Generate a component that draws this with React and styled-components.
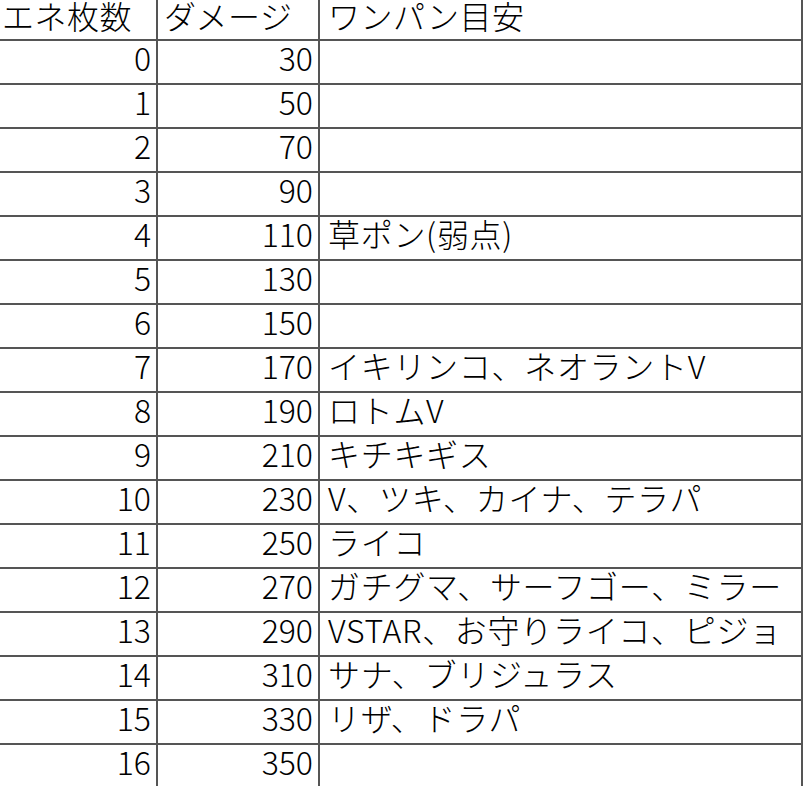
import React from "react";
import styled, { createGlobalStyle } from "styled-components";

const rows = [
  [0, 30, ""],
  [1, 50, ""],
  [2, 70, ""],
  [3, 90, ""],
  [4, 110, "草ポン(弱点)"],
  [5, 130, ""],
  [6, 150, ""],
  [7, 170, "イキリンコ、ネオラントV"],
  [8, 190, "ロトムV"],
  [9, 210, "キチキギス"],
  [10, 230, "V、ツキ、カイナ、テラパ"],
  [11, 250, "ライコ"],
  [12, 270, "ガチグマ、サーフゴー、ミラー"],
  [13, 290, "VSTAR、お守りライコ、ピジョ"],
  [14, 310, "サナ、ブリジュラス"],
  [15, 330, "リザ、ドラパ"],
  [16, 350, ""],
];

const GlobalStyle = createGlobalStyle`
  html, body {
    margin: 0;
    padding: 0;
    background: #fff;
    overflow: hidden;
  }
  body {
    font-family: "Noto Sans CJK JP", "Noto Sans", sans-serif;
    color: #000;
  }
`;

const Sheet = styled.div`
  display: grid;
  grid-template-columns: 158px 162px 483px;
  grid-template-rows: 41px;
  grid-auto-rows: 44px;
  width: 803px;
`;

const Cell = styled.div`
  box-sizing: border-box;
  border-right: 2px solid #555;
  border-bottom: 2px solid #555;
  font-size: 32px;
  font-weight: 300;
  line-height: 32px;
  padding: 0 ${(p) => (p.$num ? "5px" : "0")} 10px ${(p) => (p.$num ? "0" : p.$pad || "8px")};
  text-align: ${(p) => (p.$num ? "right" : "left")};
  letter-spacing: ${(p) => (p.$num ? "0" : "0.7px")};
  white-space: nowrap;
`;

const HeadCell = styled(Cell)`
  line-height: 31px;
  padding-bottom: 8px;
  letter-spacing: 0.5px;
`;

export default function App() {
  return (
    <>
      <GlobalStyle />
      <Sheet>
        <HeadCell $pad="2px">エネ枚数</HeadCell>
        <HeadCell $pad="6px">ダメージ</HeadCell>
        <HeadCell $pad="8px">ワンパン目安</HeadCell>
        {rows.map(([n, dmg, note]) => (
          <React.Fragment key={n}>
            <Cell $num>{n}</Cell>
            <Cell $num>{dmg}</Cell>
            <Cell>{note}</Cell>
          </React.Fragment>
        ))}
      </Sheet>
    </>
  );
}
